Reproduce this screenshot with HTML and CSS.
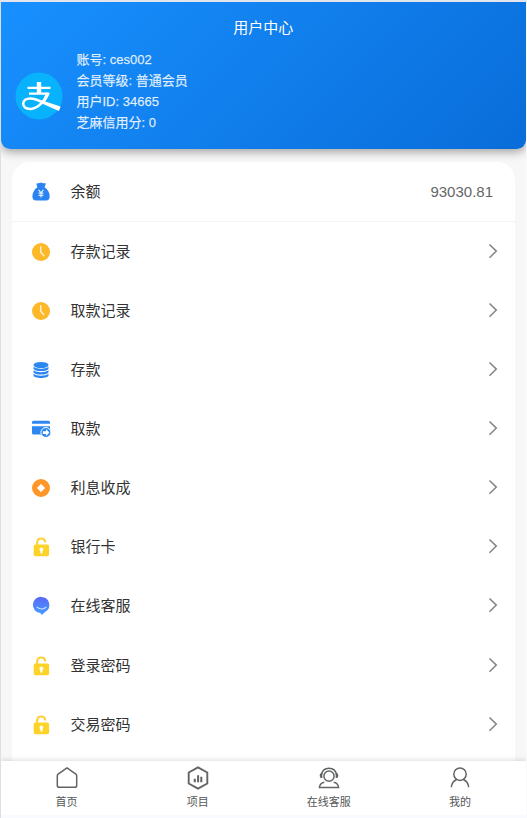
FILE: index.html
```html
<!DOCTYPE html>
<html lang="zh-CN">
<head>
<meta charset="utf-8">
<title>用户中心</title>
<link rel="stylesheet" href="styles.css">
</head>
<body>
<svg class="defs" width="0" height="0">
  <symbol id="arrow" viewBox="0 0 10 16"><path d="M1.5 1.5 8.3 8.1 1.5 14.7" fill="none" stroke="#858585" stroke-width="1.5"/></symbol>
  <symbol id="clock" viewBox="0 0 20 20"><circle cx="10" cy="10" r="9" fill="#fcb829"/><path d="M9.7 4.8v5.5l3 3.3" fill="none" stroke="#fff0cb" stroke-width="1.5" stroke-linecap="round"/></symbol>
  <symbol id="lock" viewBox="0 0 20 20"><path d="M6.1 9V5.6C6.1 2.7 7.7 1.5 10.1 1.5c2.2 0 3.8 1.1 4 3.2" fill="none" stroke="#fed136" stroke-width="2.1" stroke-linecap="round"/><rect x="2.7" y="7.4" width="15.4" height="11.9" rx="1.8" fill="#fed328"/><path d="M10.4 10.6a2 2 0 0 1 1 3.7v1.4a1 1 0 0 1-2 0v-1.4a2 2 0 0 1 1-3.7z" fill="#fff"/></symbol>
</svg>
<div class="page">
  <header class="hero">
    <h1 class="title">用户中心</h1>
    <div class="profile">
      <svg class="avatar" viewBox="0 0 48 48">
        <circle cx="24" cy="24" r="23.5" fill="#08b2fc"/>
        <g fill="none" stroke="#fff">
          <path d="M12.5 15.9h23M14 21.600h19.400" stroke-width="2.1"/>
          <path d="M24 10v11.5" stroke-width="4.400"/>
          <path d="M32.7 21C30 28.5 23.5 36.7 15.5 36.9c-4.8.1-7.3-2-7.3-5.1 0-3.4 3-5.4 7-5.4 5.500 0 12.500 3.700 17.800 6.200" stroke-width="2.500"/>
        </g>
        <path d="M30.600 20.700h4.300c-1.200 3.400-2.800 6.200-4.700 8.700l15.300 5.100c-.4 1.700-1 3.200-1.700 4.600L26.600 31.200c1.900-2.900 3.200-6.400 4-10.500z" fill="#fff"/>
      </svg>
      <div class="info">
        <p>账号: ces002</p>
        <p>会员等级: 普通会员</p>
        <p>用户ID: 34665</p>
        <p>芝麻信用分: 0</p>
      </div>
    </div>
  </header>
  <main class="card">
    <div class="row balance">
      <svg class="icon" viewBox="0 0 20 20"><path d="M6.200 1.200c1.400.5 2.300-.5 3.800-.5s2.500 1 4.200.4c1 .6.300 2.200-.4 3.200v1.200c2.900 1.600 4.900 5.200 4.900 8.700 0 3-1.300 4.300-3.600 4.300H5.100c-2.400 0-3.700-1.200-3.700-4.200 0-3.600 2-7.200 4.800-8.800V4.300C5.500 3.300 5.200 1.600 6.200 1.200z" fill="#2b83f1"/><path d="M7.600 7.900 10 10.900l2.400-3M10 10.900v4.700M7.600 11.200h4.800M7.600 13.400h4.800" fill="none" stroke="#e1edff" stroke-width="1.200"/></svg>
      <span class="label">余额</span><span class="amount">93030.81</span>
    </div>
    <div class="row"><svg class="icon"><use href="#clock"/></svg><span class="label">存款记录</span><svg class="arrow"><use href="#arrow"/></svg></div>
    <div class="row"><svg class="icon"><use href="#clock"/></svg><span class="label">取款记录</span><svg class="arrow"><use href="#arrow"/></svg></div>
    <div class="row">
      <svg class="icon" viewBox="0 0 20 20"><g fill="#2b86ef"><ellipse cx="10" cy="5" rx="7.500" ry="3.100"/><path d="M2.500 6.800c2.500 2.500 12.500 2.500 15 0v1.700c0 3.400-15 3.400-15 0zM2.500 10.300c2.500 2.500 12.500 2.500 15 0V12c0 3.400-15 3.400-15 0zM2.500 13.800c2.500 2.500 12.500 2.500 15 0v1.400c0 3.600-15 3.600-15 0z"/></g></svg>
      <span class="label">存款</span><svg class="arrow"><use href="#arrow"/></svg>
    </div>
    <div class="row">
      <svg class="icon" viewBox="0 0 20 20"><path d="M2.500 1.800h15q1.500 0 1.500 1.500V4.800H1V3.300q0-1.500 1.500-1.500zM1 7.200h18v8.200H2.500Q1 15.400 1 13.900z" fill="#2c87f2"/><circle cx="14.900" cy="13.500" r="5" fill="#2c87f2" stroke="#fff" stroke-width="1"/><path d="M11.800 12.300H15v-2.100l3.500 3.400-3.500 3.300v-2h-3.200z" fill="#fff"/></svg>
      <span class="label">取款</span><svg class="arrow"><use href="#arrow"/></svg>
    </div>
    <div class="row">
      <svg class="icon" viewBox="0 0 20 20"><circle cx="10" cy="10" r="9" fill="#ff9728"/><path d="m10 6.300 3.700 3.700-3.700 3.700L6.300 10z" fill="#fff" stroke="#fff" stroke-width=".7" stroke-linejoin="round"/></svg>
      <span class="label">利息收成</span><svg class="arrow"><use href="#arrow"/></svg>
    </div>
    <div class="row"><svg class="icon"><use href="#lock"/></svg><span class="label">银行卡</span><svg class="arrow"><use href="#arrow"/></svg></div>
    <div class="row">
      <svg class="icon" viewBox="0 0 20 20"><defs><linearGradient id="chat" x2="0" y2="1"><stop stop-color="#5869f6"/><stop offset="1" stop-color="#459dff"/></linearGradient></defs><path d="M10.500.9a8 8 0 0 1 4.200 14.700L10.900 18.900 9.300 16.900A8 8 0 0 1 10.500.9z" fill="url(#chat)"/><path d="M6 11.300q4.600 3.400 9 0" fill="none" stroke="#c7e1ff" stroke-width="1.200" stroke-linecap="round"/></svg>
      <span class="label">在线客服</span><svg class="arrow"><use href="#arrow"/></svg>
    </div>
    <div class="row"><svg class="icon"><use href="#lock"/></svg><span class="label">登录密码</span><svg class="arrow"><use href="#arrow"/></svg></div>
    <div class="row"><svg class="icon"><use href="#lock"/></svg><span class="label">交易密码</span><svg class="arrow"><use href="#arrow"/></svg></div>
  </main>
  <nav class="tabbar">
    <div class="tab">
      <svg viewBox="0 0 24 24"><path d="M12 1.800 3.100 8.200q-.8.600-.8 1.600v9.600q0 1.900 1.900 1.900h15.600q1.900 0 1.900-1.900V9.800q0-1-.8-1.600z"/></svg>
      <span>首页</span>
    </div>
    <div class="tab">
      <svg viewBox="0 0 24 24"><path d="m12 1.300 9.300 5.200v11L12 22.700l-9.300-5.200v-11z" stroke-width="1.900" stroke-linejoin="round"/><path d="M8.800 12.700v3.600M12.100 9.300v7M15.300 10.700v5.600" stroke-width="2"/></svg>
      <span>项目</span>
    </div>
    <div class="tab">
      <svg viewBox="0 0 24 24"><circle cx="12" cy="10.200" r="5.100"/><path d="M4.400 9C5.100 4.700 8 2.200 12 2.200s6.900 2.500 7.600 6.800M7.300 16.300c-3 .6-4.600 2.400-4.900 5.200h19.200c-.3-2.800-1.900-4.600-4.900-5.200"/><path d="M5.300 7H4.200Q2.700 7 2.700 9.500T4.200 12h1.100zM18.700 7h1.100q1.500 0 1.500 2.500T19.800 12h-1.100z" fill="#626464" stroke="none"/></svg>
      <span>在线客服</span>
    </div>
    <div class="tab">
      <svg viewBox="0 0 24 24"><circle cx="12" cy="8.200" r="6.200"/><path d="M3.300 21.300c.3-3.800 2.500-6.600 5.400-7.800M20.700 21.300c-.3-3.800-2.500-6.600-5.400-7.800"/></svg>
      <span>我的</span>
    </div>
  </nav>
</div>
</body>
</html>
```
FILE: styles.css
```css
* { box-sizing: border-box; }

body {
  margin: 0;
  height: 818px;
  overflow: hidden;
  padding: 2px 1.500px 3px 1px;
  background: linear-gradient(#e2e5ec 0 2px, #f9faff 2px);
  font-family: "Liberation Sans", "Noto Sans CJK SC", sans-serif;
  box-shadow: inset 1px 0 #dddee6;
}

.defs { display: block; position: absolute; }

.page {
  display: flex;
  flex-direction: column;
  height: 813px;
  background: #f7f7f7;
  overflow: hidden;
}

.hero {
  flex: none;
  height: 146.500px;
  padding-top: 14px;
  border-radius: 0 0 9px 9px;
  background: linear-gradient(135deg, #1890ff, #096dd9);
  box-shadow: 0 3px 10px rgba(0, 0, 0, .35);
  color: #fff;
}

.title {
  margin: 0;
  font-size: 15px;
  font-weight: 400;
  line-height: 24px;
  text-align: center;
}

.profile {
  display: flex;
  align-items: center;
  gap: 13.500px;
  padding: 8.500px 14px 0;
}

.avatar { width: 48px; height: 48px; margin: 10px 0 0; }

.info {
  color: rgba(255, 255, 255, .85);
  -webkit-text-stroke: .25px rgba(255, 255, 255, .7);
  font-size: 13px;
  line-height: 21.300px;
}
.info p { margin: 0; }

.card {
  flex: 1;
  min-height: 0;
  margin: 13.500px 10.500px 0;
  border-radius: 18px 18px 0 0;
  background: #fff;
  overflow: hidden;
}

.row {
  display: flex;
  align-items: center;
  height: 59.150px;
  padding: 0 17.500px 0 19.500px;
  color: #323233;
  font-size: 15px;
}
.balance { height: 60px; padding-right: 22px; border-bottom: 1px solid #f3f3f4; }
.icon { flex: none; width: 20px; height: 20px; margin-right: 19.500px; }
.label { flex: 1; line-height: 24px; }
.amount { color: #666; }
.arrow { width: 10px; height: 16px; margin-bottom: 2px; }

.tabbar {
  display: flex;
  flex: none;
  height: 54px;
  background: #fff;
  box-shadow: 0 -1px 5px rgba(0, 0, 0, .14);
}

.tab {
  display: flex;
  flex: 1;
  flex-direction: column;
  align-items: center;
  padding-top: 5px;
  color: #555758;
  font-size: 11px;
  line-height: 16px;
}
.tab svg { width: 24px; height: 24px; margin-bottom: 4px; fill: none; stroke: #626464; stroke-width: 1.500; }
```
